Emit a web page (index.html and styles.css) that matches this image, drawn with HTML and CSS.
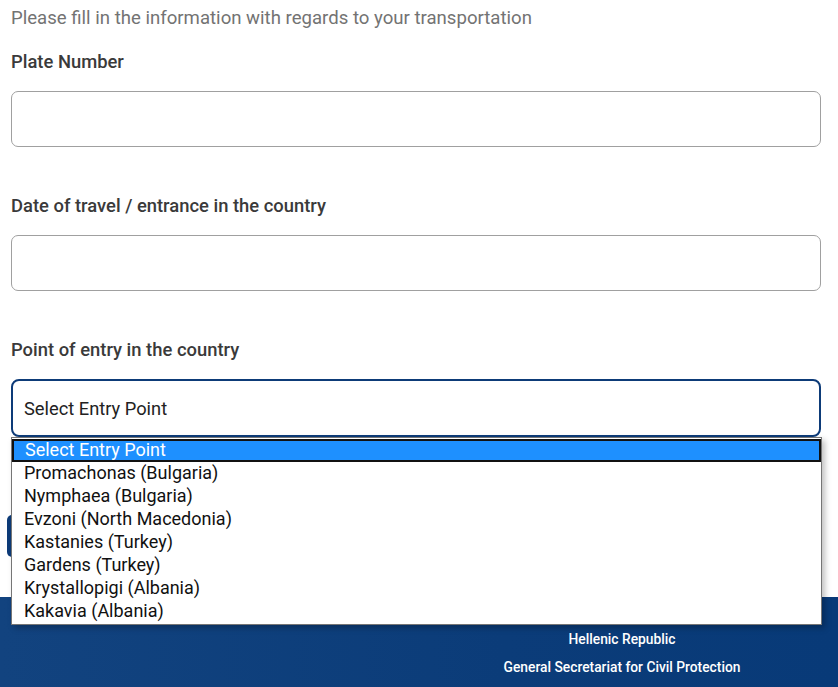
FILE: index.html
```html
<!DOCTYPE html>
<html lang="en">
<head>
<meta charset="utf-8">
<title>Transportation</title>
<link rel="stylesheet" href="styles.css">
</head>
<body>
<div class="page">
  <main class="form">
    <p class="intro">Please fill in the information with regards to your transportation</p>
    <div class="field">
      <label class="label">Plate Number</label>
      <div class="input"></div>
    </div>
    <div class="field">
      <label class="label">Date of travel / entrance in the country</label>
      <div class="input"></div>
    </div>
    <div class="field field-select">
      <label class="label">Point of entry in the country</label>
      <div class="select">Select Entry Point</div>
      <ul class="dropdown">
        <li class="option selected">Select Entry Point</li>
        <li class="option">Promachonas (Bulgaria)</li>
        <li class="option">Nymphaea (Bulgaria)</li>
        <li class="option">Evzoni (North Macedonia)</li>
        <li class="option">Kastanies (Turkey)</li>
        <li class="option">Gardens (Turkey)</li>
        <li class="option">Krystallopigi (Albania)</li>
        <li class="option">Kakavia (Albania)</li>
      </ul>
    </div>
    <div class="actions">
      <button class="submit" type="button" aria-label="Submit"></button>
    </div>
  </main>
  <footer class="footer">
    <div class="footer-left"></div>
    <div class="footer-right">
      <div class="footer-line">Hellenic Republic</div>
      <div class="footer-line">General Secretariat for Civil Protection</div>
    </div>
  </footer>
</div>
</body>
</html>
```
FILE: styles.css
```css
html, body {
  margin: 0;
  padding: 0;
  background: #ffffff;
  font-family: Roboto, "Liberation Sans", Arial, sans-serif;
}

.page {
  display: flex;
  flex-direction: column;
}

.form {
  padding: 0 17px 0 11px;
  display: flex;
  flex-direction: column;
}

.intro {
  margin: 0;
  padding-top: 8px;
  font-size: 18.6px;
  line-height: 20px;
  color: #737373;
}

.field {
  display: flex;
  flex-direction: column;
  margin-top: 24px;
}

.field + .field {
  margin-top: 49px;
}

.label {
  font-size: 18.4px;
  line-height: 20px;
  font-weight: 500;
  color: #3a3a3a;
}

.input {
  margin-top: 19px;
  height: 54px;
  border: 1px solid #a0a0a0;
  border-radius: 7px;
  background: #ffffff;
}

.field-select {
  position: relative;
}

.select {
  margin-top: 19px;
  height: 54px;
  border: 2px solid #0d3b78;
  border-radius: 8px;
  padding-left: 11px;
  display: flex;
  align-items: center;
  font-size: 18.3px;
  color: #222222;
}

.dropdown {
  position: absolute;
  top: 97px;
  left: 0;
  width: 809px;
  margin: 0;
  padding: 1px 0;
  list-style: none;
  background: #ffffff;
  border: 1px solid #767676;
  box-shadow: 3px 3px 6px rgba(0, 0, 0, 0.25);
  z-index: 10;
}

.option {
  height: 23px;
  line-height: 21px;
  padding-left: 12px;
  font-size: 18px;
  color: #111111;
  box-sizing: border-box;
}

.option.selected {
  background: #1e90ff;
  color: #ffffff;
  border: 2px solid #111111;
  line-height: 18px;
  padding-left: 11px;
}

.actions {
  margin-top: 78px;
  margin-left: -4px;
}

.submit {
  display: block;
  width: 160px;
  height: 42px;
  border: none;
  border-radius: 5px;
  background: #0d3b78;
}

.footer {
  margin-top: 40px;
  display: grid;
  grid-template-columns: 406px 1fr;
  background: linear-gradient(90deg, #12437f 0%, #0b3c79 60%, #083a78 100%);
  padding: 32px 0 30px;
  color: #ffffff;
}

.footer-right {
  display: flex;
  flex-direction: column;
  align-items: center;
  gap: 8px;
}

.footer-line {
  font-size: 13.8px;
  line-height: 20px;
  font-weight: 500;
}
```
